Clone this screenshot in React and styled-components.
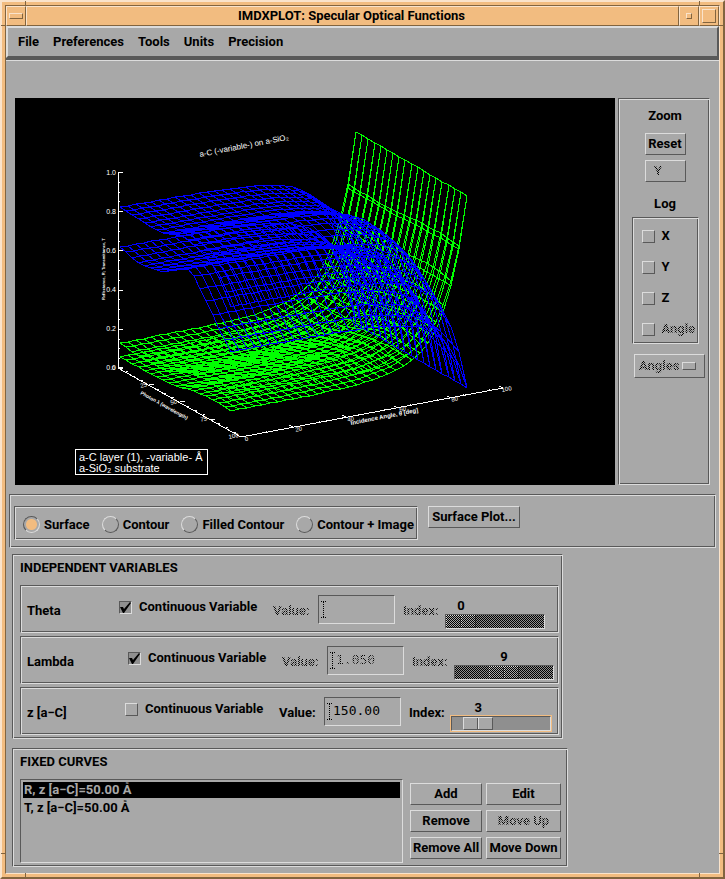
import React, { useState } from 'react'
import styled, { createGlobalStyle, css, ThemeProvider } from 'styled-components'

const theme = {
  face: '#a8a8a8',
  light: '#dcdcdc',
  dark: '#595959',
  trough: '#8f8f8f',
  frame: '#f2bc80',
  frameLight: '#fae3cb',
  frameDark: '#82643f'
}

const GlobalStyle = createGlobalStyle`
  * { box-sizing: border-box; }
  body {
    margin: 0;
    background: #a8a8a8;
    color: #000;
    font: bold 13px/16px Roboto, "Liberation Sans", Arial, sans-serif;
  }
  button, input, select { font: inherit; color: inherit; margin: 0; }
`

const raised = css`
  border: 1px solid;
  border-color: ${({ theme }) => `${theme.light} ${theme.dark} ${theme.dark} ${theme.light}`};
`

const sunken = css`
  border: 1px solid;
  border-color: ${({ theme }) => `${theme.dark} ${theme.light} ${theme.light} ${theme.dark}`};
`

const etched = css`
  ${sunken}
  box-shadow: inset 1px 1px ${({ theme }) => theme.light}, inset -1px -1px ${({ theme }) => theme.dark};
`

const stipple = css`
  mask: repeating-conic-gradient(#000 0 25%, transparent 0 50%) 0 0 / 2px 2px;
`

/* ---------- window frame ---------- */

const Frame = styled.div`
  position: relative;
  display: flex;
  flex-direction: column;
  min-height: 100vh;
  padding: 3px;
  background: ${({ theme }) => theme.frame};
  border: 2px solid;
  border-color: ${({ theme }) => `${theme.frameLight} ${theme.frameDark} ${theme.frameDark} ${theme.frameLight}`};
`

const FrameInner = styled.div`
  flex: 1;
  display: flex;
  flex-direction: column;
  border: 1px solid;
  border-color: ${({ theme }) => `${theme.frameDark} ${theme.frameLight} ${theme.frameLight} ${theme.frameDark}`};
`

const Notch = styled.i`
  position: absolute;
  ${({ $v }) => ($v === 'top' ? 'top: -1px;' : 'bottom: -1px;')}
  ${({ $h }) => ($h === 'left' ? 'left: -1px;' : 'right: -1px;')}
  width: ${({ $across }) => ($across ? '5px' : '25px')};
  height: ${({ $across }) => ($across ? '25px' : '5px')};
  border: 0 solid ${({ theme }) => theme.frameDark};
  border-${({ $v, $h, $across }) => ($across ? ($v === 'top' ? 'bottom' : 'top') : $h === 'left' ? 'right' : 'left')}-width: 1px;
`

const TitleBar = styled.header`
  display: flex;
  height: 20px;
  color: #000;
`

const titlePart = css`
  background: ${({ theme }) => theme.frame};
  border: 1px solid;
  border-color: ${({ theme }) => `${theme.frameLight} ${theme.frameDark} ${theme.frameDark} ${theme.frameLight}`};
`

const Title = styled.h1`
  ${titlePart}
  flex: 1;
  margin: 0;
  padding-right: 2px;
  font-size: 13px;
  line-height: 18px;
  text-align: center;
`

const TitleButton = styled.button`
  ${titlePart}
  display: flex;
  align-items: center;
  justify-content: center;
  width: 20px;
  padding: 0;

  &::before {
    content: '';
    width: ${({ $w }) => $w}px;
    height: ${({ $h }) => $h}px;
    border: 1px solid;
    border-color: ${({ theme }) => `${theme.frameLight} ${theme.frameDark} ${theme.frameDark} ${theme.frameLight}`};
  }
`

const MenuBar = styled.nav`
  display: flex;
  gap: 14px;
  height: 32px;
  padding: 6px 10px;
  background: ${({ theme }) => theme.face};
  border: 2px solid;
  border-color: ${({ theme }) => `${theme.light} ${theme.dark} ${theme.dark} ${theme.light}`};
`

const MenuButton = styled.button`
  padding: 0;
  background: none;
  border: 0;
`

const Body = styled.main`
  flex: 1;
  padding: 38px 3px 6px;
  background: ${({ theme }) => theme.face};
  border-top: 2px solid ${({ theme }) => theme.dark};
  border-bottom-color: ${({ theme }) => theme.light};
  box-shadow: inset 0 1px ${({ theme }) => theme.light};
`

/* ---------- shared controls ---------- */

const Push = styled.button`
  ${raised}
  height: 22px;
  padding: 0 2px;
  background: ${({ theme }) => theme.face};
  white-space: nowrap;
`

const Dim = styled.span`
  ${({ $on }) => $on && stipple}
`

const Toggle = styled.label`
  display: flex;
  align-items: center;
  gap: 7px;
  white-space: nowrap;
`

const CheckBox = styled.input.attrs({ type: 'checkbox' })`
  ${raised}
  appearance: none;
  flex: none;
  width: 13px;
  height: 13px;

  &:checked {
    border-color: ${({ theme }) => `${theme.dark} ${theme.light} ${theme.light} ${theme.dark}`};
    background: ${({ theme }) => theme.trough};
  }
`

const CheckWrap = styled.span`
  position: relative;
  display: flex;

  svg {
    position: absolute;
    inset: 0;
    pointer-events: none;
  }
`

const Check = ({ checked, ...rest }) => (
  <CheckWrap>
    <CheckBox checked={checked} readOnly {...rest} />
    {checked && (
      <svg width="13" height="13" viewBox="0 0 13 13">
        <path d="M1 6 L4 6 L5 8 L11 1 L12 2 L5 12 L4 12 Z" />
      </svg>
    )}
  </CheckWrap>
)

const Radio = styled.input.attrs({ type: 'radio' })`
  appearance: none;
  width: 17px;
  height: 17px;
  border: 1px solid;
  border-color: ${({ theme }) => `${theme.light} ${theme.dark} ${theme.dark} ${theme.light}`};
  border-radius: 50%;

  &:checked {
    border-color: ${({ theme }) => `${theme.dark} ${theme.light} ${theme.light} ${theme.dark}`};
    background: radial-gradient(circle, ${({ theme }) => theme.frame} 5px, transparent 6px);
  }
`

/* ---------- plot ---------- */

const PlotRow = styled.section`
  display: flex;
  gap: 3px;
  padding: 0 6px;
`

const Canvas = styled.svg`
  flex: 1;
  display: block;
  min-width: 0;
  background: #000;
  font: 7px "Liberation Sans", Arial, sans-serif;
  fill: #fff;
`

const lerp = (stops, w) => {
  const i = Math.max(1, stops.findIndex(s => s[0] >= w))
  const [w0, z0] = stops[i - 1]
  const [w1, z1] = stops[i]
  return z0 + ((z1 - z0) * (w - w0)) / (w1 - w0)
}

const NU = 30
const NW = 18

// u runs along the angle axis, w along the wavelength axis, z is 0..1
const project = (u, w, z) =>
  `${Math.round(105 + 236 * u + 111 * w)},${Math.round(270 - 44 * u + 64 * w - 196 * z)}`

const grazing = u => {
  const m = NU * (1 - u)
  return 0.75 * Math.exp(-0.42 * m) + 0.25 * Math.exp(-0.2 * m)
}

const mesh = height => {
  const lines = []
  for (let j = 0; j <= NW; j++) {
    const pts = []
    for (let i = 0; i <= NU; i++) pts.push(project(i / NU, j / NW, height(i / NU, j / NW)))
    lines.push('M' + pts.join('L'))
  }
  for (let i = 0; i <= NU; i++) {
    const pts = []
    for (let j = 0; j <= NW; j++) pts.push(project(i / NU, j / NW, height(i / NU, j / NW)))
    lines.push('M' + pts.join('L'))
  }
  return lines.join('')
}

const reflectance = stops => mesh((u, w) => {
  const r = lerp(stops, w)
  return r + (0.98 - r) * grazing(u)
})
const transmittance = stops => mesh((u, w) => lerp(stops, w) * (1 - grazing(u)))

const green = [
  [[0, 0.127], [0.2, 0.11], [0.4, 0.12], [0.6, 0.17], [0.8, 0.2], [1, 0.16]],
  [[0, 0.056], [0.3, 0.06], [0.5, 0.07], [0.65, 0.1], [0.8, 0.11], [1, 0.107]]
].map(reflectance)

const blue = [
  [[0, 0.82], [0.25, 0.81], [0.4, 0.815], [0.54, 0.855], [0.65, 0.85], [0.79, 0.82], [0.88, 0.76], [1, 0.64]],
  [[0, 0.617], [0.18, 0.59], [0.375, 0.612], [0.52, 0.67], [0.63, 0.715], [0.79, 0.585], [0.88, 0.497], [1, 0.41]]
].map(transmittance)

const zTicks = Array.from({ length: 21 }, (_, i) => i)
const xTicks = [0, 20, 40, 60, 80, 100]
const wTicks = [0, 25, 50, 75, 100]

const Plot = () => (
  <Canvas viewBox="0 0 600 387">
    <g fill="none" strokeWidth="1" shapeRendering="crispEdges">
      {green.map((d, i) => <path key={i} d={d} stroke="#0f0" />)}
      {blue.map((d, i) => <path key={i} d={d} stroke="#00f" />)}
      <path d="M103 74V270L226 339L488 290" stroke="#fff" />
      {zTicks.map(i => (
        <path key={i} d={`M103 ${Math.round(270 - i * 9.8)}h${i % 4 ? 2 : 5}`} stroke="#fff" />
      ))}
      {Array.from({ length: 21 }, (_, i) => (
        <path key={i} d={`M${Math.round(226 + i * 13.1)} ${Math.round(339 - i * 2.45)}l-${i % 4 ? 1 : 4} -${i % 4 ? 1 : 2}`} stroke="#fff" />
      ))}
      {Array.from({ length: 17 }, (_, i) => (
        <path key={i} d={`M${Math.round(103 + i * 7.7)} ${Math.round(270 + i * 4.3)}l${i % 4 ? 2 : 5} -1`} stroke="#fff" />
      ))}
      <rect x="60" y="351" width="132" height="25" stroke="#fff" />
    </g>
    {[0, 1, 2, 3, 4, 5].map(i => (
      <text key={i} x="101" y={272 - i * 39} textAnchor="end">{(i / 5).toFixed(1)}</text>
    ))}
    {xTicks.map((t, i) => (
      <text key={t} textAnchor="middle" fontSize="6" transform={`translate(${232 + i * 52} ${343 - i * 10}) rotate(-11)`}>{t}</text>
    ))}
    {wTicks.map((t, i) => (
      <text key={t} textAnchor="middle" fontSize="6" transform={`translate(${99 + i * 30} ${272 + i * 17}) rotate(-11)`}>{t}</text>
    ))}
    <text fontSize="8" transform="translate(185 59) rotate(-11)">a-C (-variable-) on a-SiO₂</text>
    <text fontSize="4" fontWeight="bold" transform="translate(90 202) rotate(-90)">Reflectance, R; Transmittance, T</text>
    <text fontSize="5" fontWeight="bold" transform="translate(125 296) rotate(29)">Photon λ (wavelength)</text>
    <text fontSize="6" fontWeight="bold" transform="translate(336 327) rotate(-11)">Incidence Angle, θ [deg]</text>
    <text x="64" y="363" fontSize="11">a-C layer (1), -variable- Å</text>
    <text x="64" y="374" fontSize="11">a-SiO₂ substrate</text>
  </Canvas>
)

const SidePanel = styled.aside`
  ${etched}
  display: flex;
  flex: none;
  flex-direction: column;
  align-items: center;
  width: 92px;
  padding: 9px 4px 0 6px;
`

const SideTitle = styled.h2`
  margin: 0;
  font-size: 13px;
  line-height: 16px;
`

const ZoomButtons = styled.div`
  display: flex;
  flex-direction: column;
  gap: 5px;
  margin: 9px 0 14px;
`

const ZoomButton = styled(Push)`
  width: 41px;
  padding: ${({ disabled }) => (disabled ? '0 14px 0 0' : '0')};
`

const LogBox = styled.div`
  ${etched}
  display: flex;
  flex-direction: column;
  gap: 15px;
  width: 67px;
  height: 127px;
  margin-top: 5px;
  padding: 10px 0 0 9px;
`

const OptionMenu = styled.div`
  ${raised}
  display: flex;
  align-items: center;
  align-self: flex-end;
  width: 71px;
  height: 24px;
  margin-top: 10px;
  padding-left: 4px;

  select {
    ${stipple}
    flex: 1;
    width: 46px;
    padding: 0;
    appearance: none;
    background: none;
    border: 0;
    opacity: 1;
    color: #000;
  }

  &::after {
    ${raised}
    content: '';
    width: 12px;
    height: 6px;
    margin-right: 8px;
  }
`

/* ---------- plot style bar ---------- */

const StyleBar = styled.section`
  ${etched}
  display: flex;
  align-items: flex-start;
  gap: 10px;
  height: 54px;
  margin-top: 9px;
  padding: 11px 4px;
`

const RadioGroup = styled.fieldset`
  ${etched}
  display: flex;
  justify-content: space-between;
  width: 404px;
  height: 34px;
  margin: 0;
  padding: 3px 3px 0 8px;
`

const RadioLabel = styled(Toggle)`
  gap: 4px;
`

const SurfaceButton = styled(Push)`
  width: 92px;
`

/* ---------- variables ---------- */

const Group = styled.section`
  ${etched}
  width: fit-content;
  margin: ${({ $top }) => $top}px 3px 0;
  padding: 5px 3px 3px 7px;
`

const GroupTitle = styled.h2`
  margin: 0 0 9px;
  font: inherit;
`

const Rows = styled.div`
  display: grid;
  gap: 3px;
`

const Row = styled.div`
  ${etched}
  display: flex;
  align-items: center;
  height: 48px;
  padding: 0 4px 0 6px;
`

const RowName = styled.span`
  width: ${({ $width }) => $width}px;
  padding-top: 4px;
`

const RowToggle = styled(Toggle)`
  width: 154px;
  padding-bottom: 4px;
`

const FieldLabel = styled.label`
  width: ${({ $width }) => $width}px;
  padding-top: 4px;
`

const Field = styled.span`
  ${sunken}
  display: flex;
  align-items: center;
  width: 77px;
  height: 29px;
  margin-right: 8px;
  padding-left: 1px;

  input {
    ${({ $dim }) => $dim && stipple}
    width: 64px;
    padding: 0;
    background: none;
    border: 0;
    color: #000;
    font: 13px/20px "DejaVu Sans Mono", monospace;
  }
`

const Beam = () => (
  <svg width="7" height="17" viewBox="0 0 7 17" fill="none" stroke="#000" strokeDasharray="1 1" shapeRendering="crispEdges">
    <path d="M1 .5h5M1 16.5h5M3.5 1v15" />
  </svg>
)

const Scale = styled.span`
  position: relative;
  align-self: flex-end;
  display: block;
  flex: none;
  width: 100px;
  padding-top: 16px;
  margin-bottom: 3px;

  output {
    position: absolute;
    top: 0;
    transform: translateX(-50%);
  }
`

const Trough = styled.span`
  position: relative;
  display: block;

  ${({ $dim }) => $dim && css`
    &::after {
      content: '';
      position: absolute;
      inset: 1px;
      background: repeating-conic-gradient(#000 0 25%, transparent 0 50%) 0 0 / 2px 2px;
      pointer-events: none;
    }
  `}

  input {
    ${sunken}
    appearance: none;
    display: block;
    width: 100px;
    height: 15px;
    background: ${({ theme }) => theme.trough};
    box-shadow: ${({ $focus, theme }) => ($focus ? `0 0 0 1px ${theme.frame}` : 'none')};
  }

  input::-webkit-slider-thumb {
    ${raised}
    appearance: none;
    width: 30px;
    height: 13px;
    background: linear-gradient(
      90deg,
      ${({ theme }) => `${theme.face} 13px, ${theme.dark} 13px 14px, ${theme.light} 14px 15px, ${theme.face} 15px`}
    );
  }
`

const variables = [
  { id: 'theta', name: 'Theta', width: 92, on: true, value: '', index: 0 },
  { id: 'lambda', name: 'Lambda', width: 101, on: true, value: '1.050', index: 9 },
  { id: 'z', name: 'z [a−C]', width: 98, on: false, value: '150.00', index: 3 }
]

const VariableRow = ({ id, name, width, on, value, index }) => {
  const [pos, setPos] = useState(index)
  return (
    <Row>
      <RowName $width={width}>{name}</RowName>
      <RowToggle>
        <Check checked={on} />
        Continuous Variable
      </RowToggle>
      <FieldLabel htmlFor={`${id}-value`} $width={45}><Dim $on={on}>Value:</Dim></FieldLabel>
      <Field $dim={on}>
        <Beam />
        <input id={`${id}-value`} defaultValue={value} disabled={on} />
      </Field>
      <FieldLabel htmlFor={`${id}-index`} $width={42}><Dim $on={on}>Index:</Dim></FieldLabel>
      <Scale>
        <output htmlFor={`${id}-index`} style={{ left: 16 + (pos * 68) / 18 }}>{pos}</output>
        <Trough $dim={on} $focus={!on}>
          <input
            id={`${id}-index`}
            type="range"
            min="0"
            max="18"
            value={pos}
            disabled={on}
            onChange={e => setPos(Number(e.target.value))}
          />
        </Trough>
      </Scale>
    </Row>
  )
}

/* ---------- fixed curves ---------- */

const CurveArea = styled.div`
  display: flex;
  gap: 7px;
  padding-right: 3px;
`

const CurveList = styled.select`
  ${sunken}
  width: 383px;
  height: 84px;
  padding: 2px;
  overflow: hidden;
  background: ${({ theme }) => theme.face};
  border-radius: 0;
  outline: 0;

  option {
    height: 16px;
    margin-bottom: 2px;
    padding: 0 1px;
    font-weight: bold;
    line-height: 16px;
    min-height: 0;
  }

  option:checked {
    background: #000 linear-gradient(#000, #000);
    color: ${({ theme }) => theme.face};
    -webkit-text-fill-color: ${({ theme }) => theme.face};
  }
`

const CurveButtons = styled.div`
  display: grid;
  grid-template-columns: 72px 75px;
  gap: 5px 4px;
  align-content: start;
  padding-top: 4px;
`

const curveActions = ['Add', 'Edit', 'Remove', 'Move Up', 'Remove All', 'Move Down']

const App = () => {
  const [mode, setMode] = useState('Surface')

  return (
    <ThemeProvider theme={theme}>
      <GlobalStyle />
      <Frame>
        <Notch $v="top" $h="left" />
        <Notch $v="top" $h="left" $across />
        <Notch $v="top" $h="right" />
        <Notch $v="top" $h="right" $across />
        <Notch $v="bottom" $h="left" />
        <Notch $v="bottom" $h="left" $across />
        <Notch $v="bottom" $h="right" />
        <Notch $v="bottom" $h="right" $across />
        <FrameInner>
          <TitleBar>
            <TitleButton $w={12} $h={4} aria-label="Window menu" />
            <Title>IMDXPLOT: Specular Optical Functions</Title>
            <TitleButton $w={4} $h={4} aria-label="Minimize" />
            <TitleButton $w={12} $h={12} aria-label="Maximize" />
          </TitleBar>
          <MenuBar>
            {['File', 'Preferences', 'Tools', 'Units', 'Precision'].map(m => (
              <MenuButton key={m}>{m}</MenuButton>
            ))}
          </MenuBar>
          <Body>
            <PlotRow>
              <Plot />
              <SidePanel>
                <SideTitle>Zoom</SideTitle>
                <ZoomButtons>
                  <ZoomButton>Reset</ZoomButton>
                  <ZoomButton disabled><Dim $on>Y</Dim></ZoomButton>
                </ZoomButtons>
                <SideTitle>Log</SideTitle>
                <LogBox>
                  <Toggle><Check checked={false} />X</Toggle>
                  <Toggle><Check checked={false} />Y</Toggle>
                  <Toggle><Check checked={false} />Z</Toggle>
                  <Toggle><Check checked={false} disabled /><Dim $on>Angle</Dim></Toggle>
                </LogBox>
                <OptionMenu>
                  <select disabled aria-label="Angle units">
                    <option>Angles</option>
                  </select>
                </OptionMenu>
              </SidePanel>
            </PlotRow>

            <StyleBar>
              <RadioGroup>
                {['Surface', 'Contour', 'Filled Contour', 'Contour + Image'].map(m => (
                  <RadioLabel key={m}>
                    <Radio name="mode" checked={mode === m} onChange={() => setMode(m)} />
                    {m}
                  </RadioLabel>
                ))}
              </RadioGroup>
              <SurfaceButton>Surface Plot...</SurfaceButton>
            </StyleBar>

            <Group $top={6}>
              <GroupTitle>INDEPENDENT VARIABLES</GroupTitle>
              <Rows>
                {variables.map(v => <VariableRow key={v.id} {...v} />)}
              </Rows>
            </Group>

            <Group $top={9}>
              <GroupTitle>FIXED CURVES</GroupTitle>
              <CurveArea>
                <CurveList size="4" defaultValue="r" aria-label="Fixed curves">
                  <option value="r">R, z [a−C]=50.00 Å</option>
                  <option value="t">T, z [a−C]=50.00 Å</option>
                </CurveList>
                <CurveButtons>
                  {curveActions.map(a => (
                    <Push key={a} disabled={a === 'Move Up'}>
                      <Dim $on={a === 'Move Up'}>{a}</Dim>
                    </Push>
                  ))}
                </CurveButtons>
              </CurveArea>
            </Group>
          </Body>
        </FrameInner>
      </Frame>
    </ThemeProvider>
  )
}

export default App
